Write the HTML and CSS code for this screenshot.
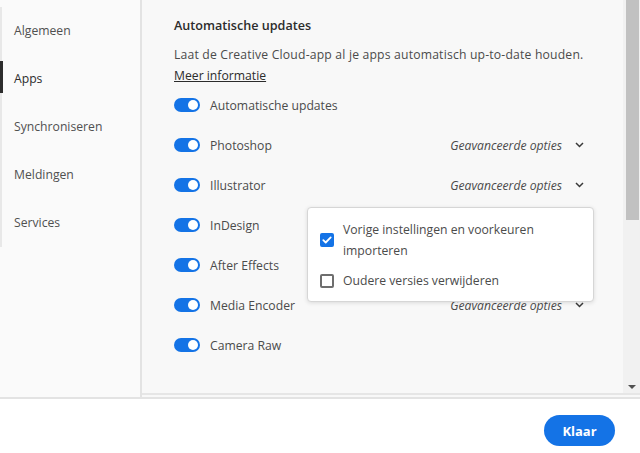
FILE: index.html
```html
<!DOCTYPE html>
<html lang="nl">
<head>
<meta charset="utf-8">
<title>Voorkeuren</title>
<link rel="stylesheet" href="styles.css">
</head>
<body>
<div class="page">
  <div class="top">
    <nav class="sidebar">
      <ul class="nav">
        <li class="nav-item">Algemeen</li>
        <li class="nav-item active">Apps</li>
        <li class="nav-item">Synchroniseren</li>
        <li class="nav-item">Meldingen</li>
        <li class="nav-item">Services</li>
      </ul>
    </nav>
    <section class="panel">
      <div class="panel-body">
        <div class="content">
          <h2 class="heading">Automatische updates</h2>
          <p class="desc"><span class="desc-line">Laat de Creative Cloud-app al je apps automatisch up-to-date houden.</span><br><a class="link">Meer informatie</a></p>
          <div class="rows">
            <div class="row"><span class="toggle"></span><span class="label">Automatische updates</span></div>
            <div class="row"><span class="toggle"></span><span class="label">Photoshop</span><span class="adv">Geavanceerde opties<svg class="chev" width="9" height="6" viewBox="0 0 9 6"><path d="M1 1l3.5 3.5L8 1" fill="none" stroke="#3a3a3a" stroke-width="1.5"/></svg></span></div>
            <div class="row"><span class="toggle"></span><span class="label">Illustrator</span><span class="adv">Geavanceerde opties<svg class="chev" width="9" height="6" viewBox="0 0 9 6"><path d="M1 1l3.5 3.5L8 1" fill="none" stroke="#3a3a3a" stroke-width="1.5"/></svg></span></div>
            <div class="row"><span class="toggle"></span><span class="label">InDesign</span></div>
            <div class="row"><span class="toggle"></span><span class="label">After Effects</span></div>
            <div class="row"><span class="toggle"></span><span class="label">Media Encoder</span><span class="adv">Geavanceerde opties<svg class="chev" width="9" height="6" viewBox="0 0 9 6"><path d="M1 1l3.5 3.5L8 1" fill="none" stroke="#3a3a3a" stroke-width="1.5"/></svg></span></div>
            <div class="row"><span class="toggle"></span><span class="label">Camera Raw</span></div>
          </div>
        </div>
        <div class="scrollbar">
          <div class="thumb"></div>
          <div class="arrow"></div>
        </div>
        <div class="popup">
          <div class="opt"><span class="cb checked"><svg width="10" height="8" viewBox="0 0 10 8"><path d="M1.3 4.2l2.4 2.3L8.7 1.4" fill="none" stroke="#fff" stroke-width="1.8" stroke-linecap="round" stroke-linejoin="round"/></svg></span><span class="opt-text">Vorige instellingen en voorkeuren importeren</span></div>
          <div class="opt"><span class="cb"></span><span class="opt-text">Oudere versies verwijderen</span></div>
        </div>
      </div>
    </section>
  </div>
  <footer class="footer">
    <button class="btn">Klaar</button>
  </footer>
</div>
</body>
</html>
```
FILE: styles.css
```css
* { box-sizing: border-box; }
html, body { margin: 0; padding: 0; }
body {
  width: 640px;
  height: 453px;
  overflow: hidden;
  font-family: "Open Sans", "Noto Sans", sans-serif;
  font-size: 12.2px;
  color: #4b4b4b;
  background: #fff;
}
.page { display: flex; flex-direction: column; height: 453px; }
.top {
  display: flex;
  height: 399px;
  border-bottom: 2px solid #e3e3e3;
}
.sidebar {
  width: 142px;
  background: #fafafa;
  border-right: 2px solid #e3e3e3;
  padding-top: 7px;
}
.nav {
  list-style: none;
  margin: 0;
  padding: 0;
  border-left: 2px solid #e8e8e8;
}
.nav-item {
  position: relative;
  height: 48px;
  line-height: 48px;
  padding-left: 12px;
  color: #505050;
}
.nav-item.active { color: #2c2c2c; }
.nav-item.active::before {
  content: "";
  position: absolute;
  left: -2px;
  top: 6px;
  width: 3px;
  height: 32px;
  background: #2c2c2c;
}
.panel {
  flex: 1;
  background: #f8f8f8;
  display: flex;
  flex-direction: column;
}
.panel-body {
  position: relative;
  display: flex;
  height: 395px;
  border-bottom: 2px solid #e6e6e6;
}
.content {
  flex: 1;
  padding: 15px 39px 0 32px;
  overflow: hidden;
}
.heading {
  margin: 0;
  font-size: 12.6px;
  font-weight: 600;
  color: #2c2c2c;
  line-height: 21px;
}
.desc {
  margin: 8px 0 0;
  line-height: 21px;
  color: #4b4b4b;
  white-space: nowrap;
}
.desc-line { letter-spacing: 0.18px; }
.link { text-decoration: underline; color: #2c2c2c; }
.rows { margin-top: -1px; }
.row {
  display: flex;
  align-items: center;
  height: 40px;
}
.toggle {
  position: relative;
  width: 26px;
  height: 14px;
  border-radius: 7px;
  background: #1473e6;
  margin-right: 10px;
  flex: none;
}
.toggle::after {
  content: "";
  position: absolute;
  right: 2px;
  top: 2px;
  width: 10px;
  height: 10px;
  border-radius: 50%;
  background: #fff;
}
.label { flex: 1; color: #4b4b4b; }
.adv {
  font-style: italic;
  color: #4b4b4b;
  display: flex;
  align-items: center;
}
.chev { margin-left: 13px; }
.scrollbar {
  width: 17px;
  background: #f1f1f1;
  display: flex;
  flex-direction: column;
  justify-content: space-between;
  align-items: center;
  padding-bottom: 4px;
}
.thumb {
  width: 13px;
  height: 220px;
  background: #c1c1c1;
  margin-left: 2px;
}
.arrow {
  width: 0;
  height: 0;
  border-left: 4px solid transparent;
  border-right: 4px solid transparent;
  border-top: 4px solid #505050;
}
.popup {
  position: absolute;
  left: 165px;
  top: 207px;
  width: 287px;
  height: 95px;
  background: #fff;
  border: 1px solid #d6d6d6;
  border-radius: 4px;
  box-shadow: 0 1px 4px rgba(0,0,0,0.12);
  padding: 11px 12px 10px 12px;
}
.opt {
  display: flex;
  align-items: center;
  margin-bottom: 9px;
}
.opt-text { line-height: 21px; color: #4b4b4b; margin-left: 9px; width: 220px; }
.cb {
  flex: none;
  width: 14px;
  height: 14px;
  border: 2px solid #6e6e6e;
  border-radius: 2px;
  display: flex;
  align-items: center;
  justify-content: center;
}
.cb.checked { background: #1473e6; border-color: #1473e6; }
.footer {
  flex: 1;
  display: flex;
  justify-content: flex-end;
  align-items: flex-start;
  padding: 16px 25px 0 0;
}
.btn {
  width: 71px;
  height: 31px;
  border-radius: 16px;
  border: none;
  background: #1473e6;
  color: #fff;
  font-family: "Open Sans", "Noto Sans", sans-serif;
  font-weight: 700;
  font-size: 13px;
}
```
